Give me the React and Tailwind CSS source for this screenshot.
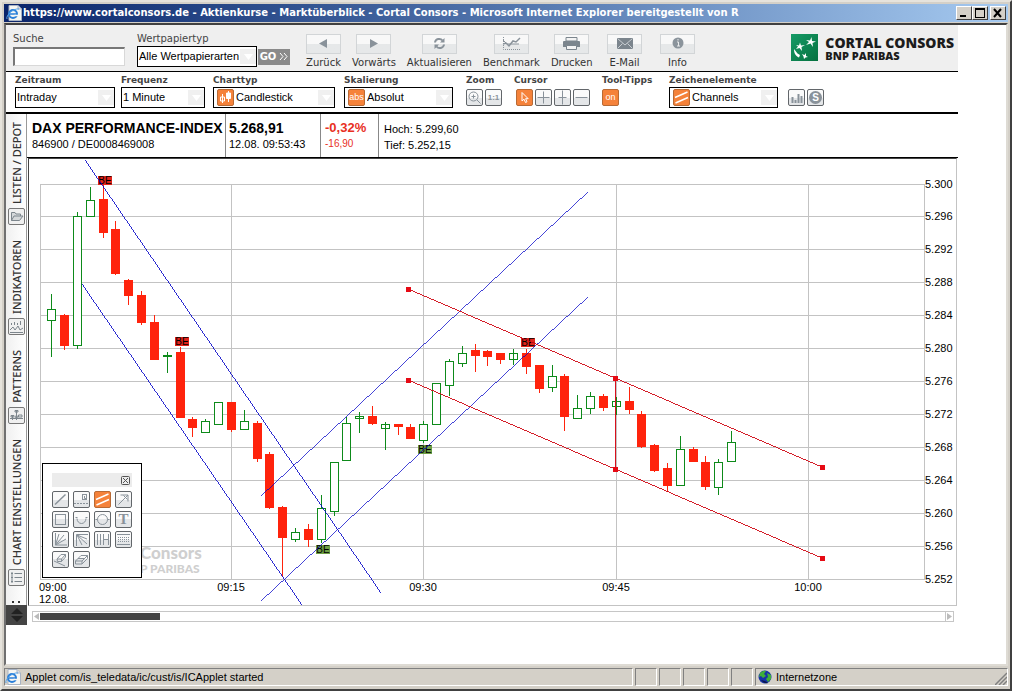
import React from "react";

const sans = "font-['Liberation_Sans',Arial,sans-serif]";
const verdana = "font-['DejaVu_Sans',Verdana,sans-serif]";

/* x, open/close top, open/close bottom, high, low, r = falling / g = rising */
const CANDLES = [
  [51, 309, 320, 294, 356, "g"], [64, 315, 346, 314, 350, "r"], [77, 216, 345, 212, 348, "g"],
  [90, 200, 216, 187, 216, "g"], [103, 199, 233, 185, 238, "r"], [115, 229, 274, 221, 275, "r"],
  [128, 280, 296, 279, 305, "r"], [141, 295, 323, 291, 325, "r"], [154, 322, 360, 315, 360, "r"],
  [167, 355, 356, 352, 372, "g"], [180, 352, 418, 347, 418, "r"], [192, 419, 428, 417, 437, "r"],
  [205, 421, 432, 419, 432, "g"], [218, 402, 424, 402, 424, "g"], [231, 402, 430, 402, 432, "r"],
  [244, 421, 429, 410, 429, "g"], [257, 423, 459, 421, 462, "r"], [269, 454, 508, 452, 509, "r"],
  [282, 507, 538, 506, 577, "r"], [295, 532, 539, 528, 541, "g"], [308, 529, 540, 524, 547, "r"],
  [321, 508, 539, 495, 542, "g"], [334, 462, 511, 462, 515, "g"], [346, 423, 460, 417, 460, "g"],
  [359, 416, 418, 412, 432, "g"], [372, 416, 424, 406, 425, "r"], [385, 424, 428, 422, 449, "g"],
  [398, 424, 427, 424, 435, "r"], [410, 427, 439, 424, 439, "r"], [423, 424, 440, 421, 442, "g"],
  [436, 383, 424, 383, 424, "g"], [449, 361, 385, 359, 395, "g"], [462, 353, 363, 346, 366, "g"],
  [475, 350, 356, 344, 372, "r"], [487, 351, 357, 350, 366, "r"], [500, 353, 360, 353, 364, "r"],
  [513, 353, 359, 349, 364, "g"], [526, 353, 367, 349, 374, "r"], [539, 365, 389, 365, 393, "r"],
  [552, 376, 387, 365, 391, "g"], [564, 376, 417, 374, 431, "r"], [577, 408, 418, 395, 418, "g"],
  [590, 396, 408, 392, 413, "g"], [603, 396, 408, 394, 411, "r"], [616, 401, 406, 397, 414, "g"],
  [629, 401, 410, 387, 414, "r"], [641, 414, 447, 411, 448, "r"], [654, 445, 471, 444, 472, "r"],
  [667, 468, 486, 463, 492, "r"], [680, 449, 485, 436, 485, "g"], [693, 449, 462, 447, 462, "r"],
  [705, 462, 487, 456, 490, "r"], [718, 462, 487, 459, 494, "g"], [731, 442, 461, 431, 461, "g"],
];
const PRICES = [
  [184, "5.300"], [216, "5.296"], [249, "5.292"], [282, "5.288"], [315, "5.284"], [348, "5.280"], [381, "5.276"],
  [414, "5.272"], [447, "5.268"], [480, "5.264"], [513, "5.260"], [546, "5.256"], [579, "5.252"],
];
const TIMES = [[231, "09:15"], [423, "09:30"], [616, "09:45"], [808, "10:00"]];
const BADGES = [[98, 176, "#e2231a"], [175, 337, "#e2231a"], [521, 338, "#e2231a"], [316, 545, "#6f9f45"], [418, 445, "#6f9f45"]];
const TRENDS = [[85, 160, 381, 593], [82, 284, 302, 605], [261, 496, 588, 192], [261, 601, 588, 297]];
const CHANNEL = [[408, 289, 822, 467], [408, 380, 822, 558]];

/* One pixel per step along the longer axis, whatever the slope. */
function PixelLine({ points: [a, b, c, d] }) {
  const dx = Math.abs(c - a);
  const dy = Math.abs(d - b);
  return <line x1={a} y1={b} x2={c} y2={d} strokeWidth={Math.max(dx, dy) / Math.hypot(dx, dy)} />;
}

function Chart() {
  return (
    <svg viewBox="29 159 927 446" className="block h-auto w-full" role="img" aria-label="DAX Candlestick Chart">
      <g fontFamily="Lato, sans-serif" fontWeight="900" fill="#cfcfcf">
        <text x="140" y="559" fontSize="17">Consors</text>
        <text x="140" y="573" fontSize="12">P PARIBAS</text>
      </g>
      <g stroke="#c3c3c3" shapeRendering="crispEdges">
        {PRICES.map(([y]) => <path key={y} d={`M40 ${y + 0.5}H925`} />)}
        {[40, 231, 423, 616, 808, 924].map((x) => <path key={x} d={`M${x + 0.5} 184V580`} />)}
      </g>
      <g shapeRendering="crispEdges">
        {CANDLES.map(([x, t, b, h, l, c]) =>
          c === "r" ? (
            <g key={x} fill="#ff230c">
              <rect x={x} y={h} width="1" height={l - h} />
              <rect x={x - 4} y={t} width="9" height={b - t} />
            </g>
          ) : (
            <g key={x} stroke="#0d8a1a" fill="#fff">
              <path d={`M${x + 0.5} ${h}V${l + 1}`} />
              <rect x={x - 3.5} y={t + 0.5} width="8" height={b - t} />
              {b - t < 7 && <path d={`M${x + 0.5} ${t}V${b}`} />}
            </g>
          )
        )}
      </g>
      {BADGES.map(([x, y, c]) => (
        <g key={x}>
          <rect x={x} y={y} width="14" height="9" fill={c} />
          <text x={x + 7} y={y + 8} textAnchor="middle" fontSize="10" fontFamily="Liberation Sans, sans-serif">BE</text>
        </g>
      ))}
      <g stroke="#0000c8" shapeRendering="crispEdges">
        {TRENDS.map((p) => <PixelLine key={p.join()} points={p} />)}
      </g>
      <g stroke="#d00a16" shapeRendering="crispEdges">
        {CHANNEL.map((p) => <PixelLine key={p.join()} points={p} />)}
      </g>
      <rect x="615" y="378" width="1" height="92" fill="#d8101c" />
      <g fill="#e60a14">
        {[[408, 289], [822, 467], [408, 380], [822, 558], [615, 378], [615, 469]].map(([x, y]) => (
          <rect key={`${x}-${y}`} x={x - 2} y={y - 2} width="5" height="5" />
        ))}
      </g>
      <g fontFamily="Liberation Sans, Arial, sans-serif" fontSize="11">
        {PRICES.map(([y, p]) => <text key={p} x="925" y={y + 4}>{p}</text>)}
        {TIMES.map(([x, t]) => <text key={t} x={x} y="591" textAnchor="middle">{t}</text>)}
        <text x="39" y="591">09:00</text>
        <text x="39" y="603">12.08.</text>
      </g>
    </svg>
  );
}

const GLYPHS = {
  zoom: <><circle cx="7.500" cy="7.500" r="4.500" /><path d="M11 11L14.500 14.500M5.500 7.500H9.500M7.500 5.500V9.500" /></>,
  cross: <path d="M2.500 8.500H14.500M8.500 2.500V14.500" />,
  crossV: <path d="M8.500 1.500V15.500M4.500 8.500H12.500" />,
  minus: <path d="M2.500 8.500H14.500" />,
  cursor: <path d="M6 3.500V12L8 10.200L9.500 13.500L11 12.800L9.600 9.700H12.200Z" />,
  channel: <path d="M2 8.500L14.500 3M2.500 14L15 8.500" strokeWidth="1.500" />,
  candle: <><path d="M5.500 5V14M3.500 8H7.500V12H3.500ZM11.500 2V13" /><path d="M9.500 4H13.500V9.500H9.500Z" fill="currentColor" /></>,
  bars: <path d="M4.500 14V8M7.500 14V11M10.500 14V5M13.500 14V7" strokeWidth="2" />,
  line: <path d="M3 13.500L13.500 3.500" strokeWidth="1.500" />,
  note: <><path d="M1 12.500H16" strokeDasharray="2 1" /><rect x="9.500" y="3.500" width="4" height="5" /><path d="M11.500 5V7.500H13" /></>,
  arrow: <path d="M3.500 13.500L13 4M5.500 4H13V10.500M8.500 4.500L12.500 8.500" />,
  rect: <rect x="3.500" y="3.500" width="10" height="10" />,
  arc: <path d="M2.500 6.500H4.500M12.500 6.500H14.500M4 7.500A4.500 5 0 0 0 13 7.500" />,
  circle: <><circle cx="8.500" cy="8.500" r="5" /><path d="M1.500 8.500H3.500M13.500 8.500H15.500" /></>,
  fan: <path d="M3.500 2V14H15M3.500 14L7 3M3.500 14L12 4M3.500 14L14 8" />,
  fanDown: <path d="M15 3.500H3.500V15M4 4L14 8M4 4L14 13M4 4L9 14" />,
  vlines: <path d="M3.500 3V14M6.500 3V14M9.500 3V14M14.500 3V14M10 8.500H14" />,
  hlines: <><path d="M2 3.500H15M2 13.500H15" /><path d="M3 6.500H15M3 8.500H15M3 10.500H15" strokeDasharray="1 1" /></>,
  eraserLine: <path d="M2 10L13 15M5 8L9 3.500H13.500V6L9.500 10.500H5.500ZM5 8H9.500L13.500 3.500M9.500 8V10.500" />,
  eraser: <path d="M2.500 10L8 4.500H14.500V7.500L9 13H2.500ZM2.500 10H9L14.500 4.500M9 10V13M5 7.500H11.500" />,
  folder: <path d="M3.500 12.500V4.500H7L8 6H12.500V8M3.500 12.500L6 8H15L11.500 12.500Z" fill="#d5d8da" />,
  indicator: <path d="M2 12L5 9L7 12L10 8L12 12L15 10M3.500 7V5M6.500 7V4M9.500 7V5M12.500 7V3M2 14.500H15" />,
  pattern: <path d="M2 11.500H15M8.500 3V13M4.500 8V13M3 8.500H6V10H3ZM7 3.500H10V5H7ZM10.500 8H14V10H10.500ZM7 11L8.500 8L10 11" />,
  settings: <path d="M3 4.500H5M6.500 4.500H14M3 8.500H5M6.500 8.500H14M3 12.500H5M6.500 12.500H14M4 3V14" />,
};

function Glyph({ name }) {
  return (
    <svg viewBox="0 0 17 17" width="17" height="17" className="block shrink-0" fill="none" stroke="currentColor" aria-hidden="true">
      {GLYPHS[name]}
    </svg>
  );
}

function Tool({ label, glyph, text, active }) {
  return (
    <button
      type="button"
      aria-label={label}
      className={`flex h-[17px] w-[17px] shrink-0 items-center justify-center overflow-hidden rounded-[2px] border ${
        active ? "border-[#b86a35] bg-[#f5823a] text-white" : "border-[#62666a] bg-linear-to-b from-[#fafafa] from-50% to-[#e4e6e8] to-50% text-[#89929a]"
      } ${sans} text-[9px] leading-none`}
    >
      {glyph ? <Glyph name={glyph} /> : text}
    </button>
  );
}

function Select({ id, value, width, icon }) {
  return (
    <div className={`relative flex h-[21px] items-center border border-black bg-white ${width}`}>
      {icon && (
        <span className="ml-[3px] flex h-[17px] w-[17px] shrink-0 items-center justify-center overflow-hidden rounded-[2px] border border-[#b86a35] bg-[#f5823a] text-[9px] leading-none text-white">
          {icon === "abs" ? "abs" : <Glyph name={icon} />}
        </span>
      )}
      <select id={id} defaultValue={value} className={`h-full min-w-0 flex-1 appearance-none bg-transparent text-[11px] leading-none text-black outline-none ${icon ? "pl-[2px]" : "pl-px"}`}>
        <option>{value}</option>
      </select>
      <span className="pointer-events-none flex h-[15px] w-4 shrink-0 items-center justify-center bg-[#f0f0f0]">
        <svg viewBox="0 0 9 6" width="9" height="6" aria-hidden="true"><path d="M0 0H9L4.500 6Z" fill="#fff" /></svg>
      </span>
    </div>
  );
}

function Field({ label, id, children, className = "" }) {
  const L = id ? "label" : "span";
  return (
    <div className={`flex flex-col gap-px ${className}`}>
      <L htmlFor={id} className={`whitespace-nowrap text-[9px] leading-[11px] font-bold text-[#444] ${verdana}`}>{label}</L>
      {children}
    </div>
  );
}

function ToolRow({ children, className = "" }) {
  return <div className={`flex h-[21px] items-center gap-[2px] ${className}`}>{children}</div>;
}

const NAV = [
  ["Zurück", <path d="M21 5V14L13 9.500Z" fill="#89929a" />, ""],
  ["Vorwärts", <path d="M14 5V14L22 9.500Z" fill="#89929a" />, ""],
  ["Aktualisieren", <g fill="none" stroke="#89929a" strokeWidth="2"><path d="M13 8.500C13.500 4.500 18.500 4 20.500 6.500M22 10.500C21.500 14.500 16.500 15 14.500 12.500" /><path d="M22.500 4V8.500H18ZM12.500 15V10.500H17Z" fill="#89929a" stroke="none" /></g>, ""],
  ["Benchmark", <g fill="none" stroke="#89929a"><path d="M9 10L12 9L15 12L19 7L22 8L26 4" strokeWidth="1.500" /><path d="M9 6L13 10L17 10L25 10" /><path d="M9.500 3V15.500H26" strokeDasharray="1 1" /></g>, ""],
  ["Drucken", <g><path d="M12 3.500H23V7H12Z" fill="#f4f4f4" stroke="#7b858d" /><path d="M9 8Q9 7 10 7H25Q26 7 26 8V13H9Z" fill="#7b858d" /><path d="M12.500 11.500H22.500V15.500H12.500Z" fill="#f4f4f4" stroke="#7b858d" /></g>, ""],
  ["E-Mail", <g><rect x="10" y="4" width="16" height="11" fill="#7b858d" /><path d="M10.500 4.500L18 11L25.500 4.500M10.500 14.500L15.500 9.500M25.500 14.500L20.500 9.500" fill="none" stroke="#c9ced2" /></g>, "w-[42px]"],
  ["Info", <g><circle cx="18" cy="9" r="5.500" fill="#8b949c" /><path d="M17 8H18.500V12M17 12H20M18 5V6.500" stroke="#e9ebec" fill="none" /></g>, "w-[42px]"],
];

function IeIcon() {
  return (
    <svg viewBox="0 0 16 16" width="16" height="16" className="shrink-0" aria-hidden="true">
      <path d="M3 0.500H12L15.500 4V15.500H3Z" fill="#f6f6f2" stroke="#a9b4c4" />
      <path d="M12 0.500V4H15.500" fill="#d6deea" stroke="#a9b4c4" />
      <circle cx="7" cy="9" r="4" fill="none" stroke="#2a7fd8" strokeWidth="2" />
      <path d="M4 9H11" stroke="#2a7fd8" strokeWidth="1.500" />
      <path d="M8.500 10.500H12" stroke="#f6f6f2" strokeWidth="1.500" />
      <path d="M1 14C-0.500 11 7 3 13 4" fill="none" stroke="#55a4ea" />
    </svg>
  );
}

function WinButton({ label, children }) {
  return (
    <button type="button" aria-label={label} className="flex h-[14px] w-4 items-center justify-center border border-t-white border-r-[#404040] border-b-[#404040] border-l-white bg-[#d4d0c8]">
      <svg viewBox="0 0 12 10" width="12" height="10" fill="none" stroke="#000" shapeRendering="crispEdges" aria-hidden="true">{children}</svg>
    </button>
  );
}

function Header() {
  return (
    <header className="flex h-[47px] items-start border-b border-black bg-[#efefef] pl-[7px]">
      <div className={`flex flex-col gap-[2px] pt-[7px] text-[#444] ${verdana}`}>
        <label htmlFor="suche" className="text-[10px] leading-[13px]">Suche</label>
        <input id="suche" type="text" className="h-[19px] w-28 border border-t-2 border-l-2 border-[#d8d8d8] border-t-[#777] border-l-[#777] bg-white px-1 text-[11px] outline-none" />
      </div>
      <div className="ml-3 flex flex-col gap-px pt-[7px] text-[#444]">
        <label htmlFor="typ" className={`text-[10px] leading-[13px] ${verdana}`}>Wertpapiertyp</label>
        <div className="flex items-center gap-px">
          <Select id="typ" value="Alle Wertpapierarten" width="w-[120px]" />
          <button type="button" className={`flex h-4 w-8 items-center justify-center gap-[3px] bg-[#8a8a8a] text-[10px] leading-none font-bold text-white ${verdana}`}>
            GO
            <svg viewBox="0 0 9 7" width="9" height="7" fill="none" stroke="#fff" aria-hidden="true"><path d="M1 0L4 3.500L1 7M5 0L8 3.500L5 7" /></svg>
          </button>
        </div>
      </div>
      <nav className="ml-4 flex gap-[11px] pt-[9px]">
        {NAV.map(([label, icon, w]) => (
          <button key={label} type="button" className={`flex flex-col items-center gap-[3px] text-[10px] leading-[12px] text-[#333] ${verdana} ${w}`}>
            <span className="block h-5 w-[35px] border border-[#d2d5d7] bg-linear-to-b from-[#f8f8f8] from-50% to-[#e6e8e9] to-50%">
              <svg viewBox="1 1 33 18" width="33" height="18" className="block" aria-hidden="true">{icon}</svg>
            </span>
            {label}
          </button>
        ))}
      </nav>
      <div className="mr-1 ml-auto flex items-start gap-[7px] pt-[9px]">
        <svg viewBox="0 0 27 27" width="27" height="27" aria-hidden="true">
          <defs><linearGradient id="g" x1="0" y1="0" x2="1" y2="1"><stop offset="0" stopColor="#159b66" /><stop offset="1" stopColor="#06713f" /></linearGradient></defs>
          <rect width="27" height="27" fill="url(#g)" />
          <g fill="#fff">
            <path d="M15 6L19 6.500L20.500 3L21 7L25 7.500L21.500 9L22 13L19.500 9.500L15 11L18 8Z" />
            <path d="M5 11L8 11.500L9 8.500L10 11.500L14 11L10.500 13L11 17L8.500 14L5 15L7 12.500Z" />
            <path d="M3 15C3 20 5 22 8 23.500L9 21L6.500 19.500Z" />
            <path d="M11 20L13.500 21L15 19L15 22L17 23L14.500 23.500L13 25L12.500 22.500Z" />
          </g>
        </svg>
        <div className="pt-px font-['Open_Sans',sans-serif] font-extrabold whitespace-nowrap text-[#1c1c1c]">
          <div className="text-[14px] leading-[16px]">CORTAL CONSORS</div>
          <div className="text-[11px] leading-[10px]">BNP PARIBAS</div>
        </div>
      </div>
    </header>
  );
}

function Toolbar() {
  return (
    <div className={`flex h-[42px] items-start border-b-2 border-black bg-white pt-[3px] pl-[9px] ${sans}`}>
      <Field label="Zeitraum" id="zeitraum"><Select id="zeitraum" value="Intraday" width="w-[100px]" /></Field>
      <Field label="Frequenz" id="frequenz" className="ml-[6px]"><Select id="frequenz" value="1 Minute" width="w-[84px]" /></Field>
      <Field label="Charttyp" id="charttyp" className="ml-2"><Select id="charttyp" value="Candlestick" width="w-[122px]" icon="candle" /></Field>
      <Field label="Skalierung" id="skalierung" className="ml-[9px]"><Select id="skalierung" value="Absolut" width="w-[109px]" icon="abs" /></Field>
      <Field label="Zoom" className="ml-[13px]">
        <ToolRow><Tool label="Vergrößern" glyph="zoom" /><Tool label="1:1" text={<b className="text-[8px]">1:1</b>} /></ToolRow>
      </Field>
      <Field label="Cursor" className="ml-3">
        <ToolRow className="pl-[2px]">
          <Tool label="Zeiger" glyph="cursor" active /><Tool label="Fadenkreuz" glyph="cross" /><Tool label="Vertikal" glyph="crossV" /><Tool label="Horizontal" glyph="minus" />
        </ToolRow>
      </Field>
      <Field label="Tool-Tipps" className="ml-3 w-[67px]"><ToolRow><Tool label="Tool-Tipps" text="on" active /></ToolRow></Field>
      <Field label="Zeichenelemente" id="zeichen"><Select id="zeichen" value="Channels" width="w-[109px]" icon="channel" /></Field>
      <ToolRow className="mt-3 ml-[10px]">
        <Tool label="Volumen" glyph="bars" />
        <Tool label="Speichern" text={<span className="flex h-[13px] w-[13px] items-center justify-center rounded-full bg-[#89929a] text-[10px] font-bold text-white">S</span>} />
      </ToolRow>
    </div>
  );
}

const TABS = [["LISTEN / DEPOT", "folder"], ["INDIKATOREN", "indicator"], ["PATTERNS", "pattern"], ["CHART EINSTELLUNGEN", "settings"]];

function Sidebar() {
  return (
    <aside className="flex w-[21px] shrink-0 flex-col border-r border-[#999] bg-linear-to-r from-[#f0f0f0] to-white">
      <div className="flex flex-1 flex-col items-center gap-[15px] overflow-hidden pt-2">
        {TABS.map(([label, glyph]) => (
          <button key={label} type="button" className="flex flex-col items-center gap-1 text-[#333]">
            <span className="rotate-180 font-['Noto_Sans',sans-serif] text-[11px] leading-[15px] font-medium whitespace-nowrap [writing-mode:vertical-rl]">{label}</span>
            <span className="flex h-[17px] w-[17px] items-center justify-center rounded-[2px] border border-[#777] bg-[#f0f0f0] text-[#7d868d]"><Glyph name={glyph} /></span>
          </button>
        ))}
        <span className="h-[2px] w-2 border-x-2 border-[#333]" />
      </div>
      <button type="button" aria-label="Blättern" className="flex h-5 w-[21px] items-center justify-center bg-[#444]">
        <svg viewBox="0 0 12 16" width="12" height="16" fill="#222" aria-hidden="true"><path d="M0 7L6 1L12 7ZM0 9H12L6 15Z" /></svg>
      </button>
    </aside>
  );
}

const PALETTE = [
  ["Linie", "line"], ["Notiz", "note"], ["Kanal", "channel"], ["Pfeil", "arrow"],
  ["Rechteck", "rect"], ["Bogen", "arc"], ["Kreis", "circle"], ["Text", null],
  ["Fächer", "fan"], ["Fächer abwärts", "fanDown"], ["Zeitzonen", "vlines"], ["Retracement", "hlines"],
  ["Element löschen", "eraserLine"], ["Alles löschen", "eraser"],
];

function Palette() {
  return (
    <div className="absolute bottom-[27px] left-[13px] flex h-[115px] w-[100px] flex-col gap-1 border border-black bg-white px-[9px] pt-[9px]">
      <div className="flex h-[14px] shrink-0 items-center justify-end bg-[#ececec] pr-[2px]">
        <button type="button" aria-label="Schließen" className="h-[9px] w-[9px]">
          <svg viewBox="0 0 9 9" width="9" height="9" className="block" fill="none" stroke="#555" aria-hidden="true"><rect x="0.500" y="0.500" width="8" height="8" rx="1" /><path d="M2 2L7 7M7 2L2 7" /></svg>
        </button>
      </div>
      <div className="grid grid-cols-4 gap-x-1 gap-y-[3px]">
        {PALETTE.map(([label, glyph]) => (
          <Tool key={label} label={label} glyph={glyph} active={label === "Kanal"} text={<b className="font-['Liberation_Serif',serif] text-[15px]">T</b>} />
        ))}
      </div>
    </div>
  );
}

function Quote() {
  return (
    <section className={`flex h-11 items-stretch border-b border-black bg-white text-[11px] leading-4 whitespace-nowrap text-black ${sans}`}>
      <div className="w-[199px] border-r border-[#888] pt-[6px] pl-[5px]"><h1 className="text-[14px] font-bold">DAX PERFORMANCE-INDEX</h1><p>846900 / DE0008469008</p></div>
      <div className="w-[95px] border-r border-[#888] pt-[6px] pl-[3px]"><p className="text-[14px] font-bold">5.268,91</p><p>12.08. 09:53:43</p></div>
      <div className="w-[58px] border-r border-[#888] pt-[6px] pl-1 text-[#e8301f]"><p className="text-[13px] font-bold">-0,32%</p><p className="text-[10px]">-16,90</p></div>
      <div className="pt-[7px] pl-[5px]"><p>Hoch: 5.299,60</p><p>Tief: 5.252,15</p></div>
    </section>
  );
}

function ScrollBar() {
  return (
    <div className="mt-[5px] mr-1 mb-[3px] ml-[5px] flex h-[11px] items-stretch border border-[#c6c6c6] bg-white">
      <button type="button" aria-label="Zurückblättern" className="flex w-[7px] items-center justify-center"><svg viewBox="0 0 5 7" width="5" height="7" aria-hidden="true"><path d="M5 0V7L0 3.500Z" fill="#bbb" /></svg></button>
      <div className="my-px h-[7px] w-[120px] bg-[#444]" />
      <button type="button" aria-label="Vorblättern" className="ml-auto flex w-2 items-center justify-center border-l border-[#c6c6c6]"><svg viewBox="0 0 5 7" width="5" height="7" aria-hidden="true"><path d="M0 0V7L5 3.500Z" fill="#bbb" /></svg></button>
    </div>
  );
}

const pane = "border border-t-[#808080] border-r-white border-b-white border-l-[#808080]";

export default function App() {
  return (
    <div className={`flex min-h-screen flex-col border-2 border-t-[#e6e3dc] border-r-[#404040] border-b-[#404040] border-l-[#e6e3dc] bg-[#d4d0c8] p-[2px] ${sans}`}>
      <div className="flex h-[18px] items-center bg-linear-to-r from-[#0a246a] to-[#a6caf0] pl-[2px]">
        <IeIcon />
        <span className={`ml-px flex-1 overflow-hidden ${verdana} text-[10px] leading-[18px] font-bold whitespace-nowrap text-white`}>
          https://www.cortalconsors.de - Aktienkurse - Marktüberblick - Cortal Consors - Microsoft Internet Explorer bereitgestellt von R
        </span>
        <div className="flex pr-[2px]">
          <WinButton label="Minimieren"><path d="M2 8H8" strokeWidth="2" /></WinButton>
          <WinButton label="Maximieren"><path d="M1.500 1V9.500H10.500V1" /><path d="M1 1H11" strokeWidth="2" /></WinButton>
          <span className="w-[2px]" />
          <WinButton label="Schließen"><path d="M2 1L9 9M9 1L2 9" strokeWidth="2" shapeRendering="auto" /></WinButton>
        </div>
      </div>
      <main className="mt-px flex-1 border-2 border-t-[#404040] border-r-[#dedbd4] border-b-[#dedbd4] border-l-[#707070] bg-white pr-12">
        <Header />
        <Toolbar />
        <div className="flex">
          <Sidebar />
          <div className="min-w-0 flex-1">
            <Quote />
            <div className="relative mx-px border border-[#c3c3c3] border-t-[#444] border-l-[#444]">
              <Chart />
              <Palette />
            </div>
            <ScrollBar />
          </div>
        </div>
      </main>
      <footer className="flex h-[21px] items-stretch gap-[2px] pt-[2px] pb-px text-[11px] leading-[17px] text-black">
        <div className={`flex flex-1 items-center gap-1 overflow-hidden whitespace-nowrap ${pane}`}><IeIcon />Applet com/is_teledata/ic/cust/is/ICApplet started</div>
        {[0, 1, 2, 3, 4].map((i) => <div key={i} className={`w-[22px] ${pane}`} />)}
        <div className={`flex w-[253px] items-center gap-1 pl-[2px] ${pane}`}>
          <svg viewBox="0 0 14 14" width="14" height="14" aria-hidden="true"><circle cx="7" cy="7" r="6.500" fill="#1732a8" /><path d="M2 3Q5 0 8 1L6 4L8 6L5 8L3 6L1 7ZM9 3L13 5L13 9L10 12L8 9L10 7Z" fill="#3fae3a" /><path d="M3 10Q6 14 10 13L7 11Z" fill="#0b184f" /></svg>
          Internetzone
          <svg viewBox="0 0 12 14" width="12" height="14" className="ml-auto self-end" stroke="#808080" strokeWidth="1.500" aria-hidden="true"><path d="M0 14L12 2M4 14L12 6M8 14L12 10" /></svg>
        </div>
      </footer>
    </div>
  );
}
